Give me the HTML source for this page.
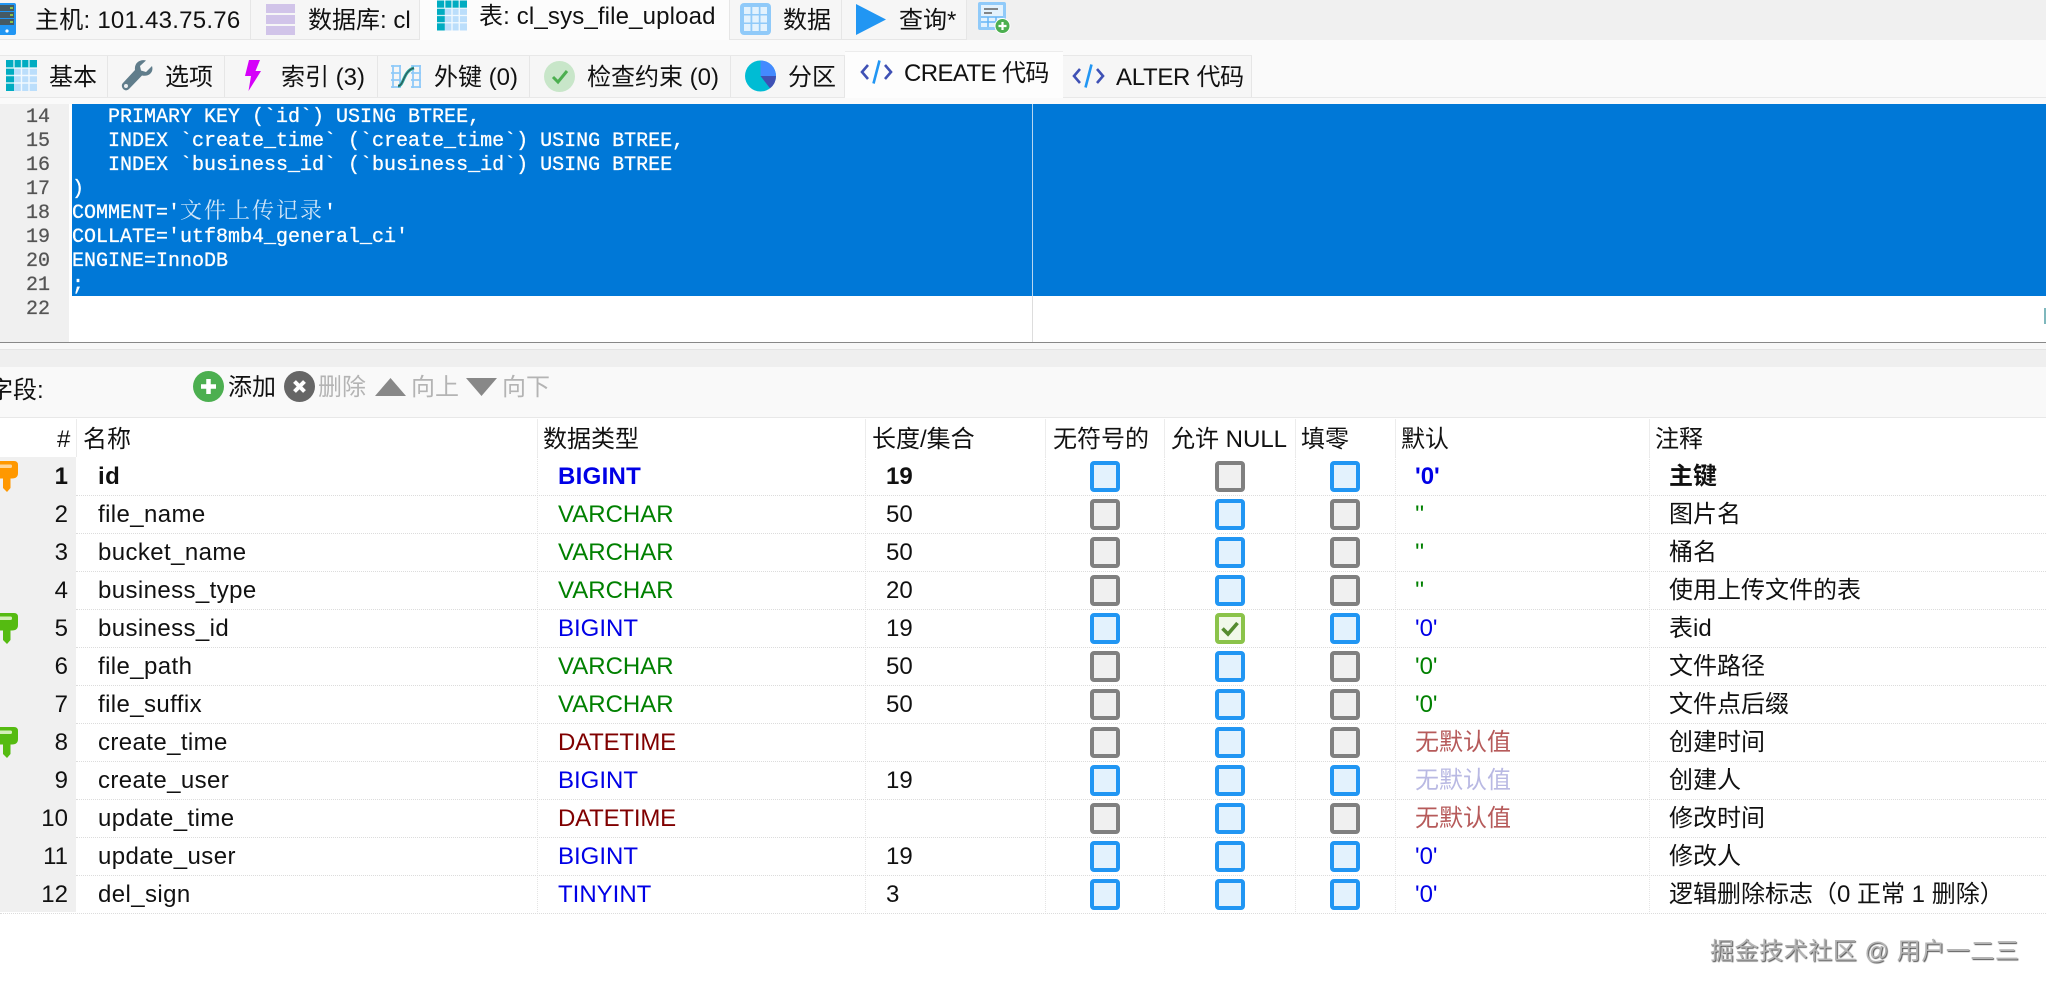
<!DOCTYPE html>
<html><head><meta charset="utf-8"><style>
html,body{margin:0;padding:0;background:#fff}
#p{position:relative;width:2046px;height:993px;overflow:hidden;background:#fff;font-family:"Liberation Sans","Noto Sans CJK SC",sans-serif;font-size:24px;color:#111}
#p div,#p svg{position:absolute}
.t{position:absolute;white-space:nowrap;line-height:1;transform:translateY(calc(-50% + 1px))}
span[style*="left:98px"]{letter-spacing:.4px}
.m{position:absolute;white-space:pre;line-height:24px;height:24px;margin-top:1px;font-family:"Liberation Mono","Noto Sans CJK SC",monospace;font-size:20px;color:#fff;left:72px;-webkit-text-stroke:.3px #fff}
.m b{font-weight:normal;font-size:22px;letter-spacing:2px;font-family:"Noto Serif CJK SC",serif;-webkit-text-stroke:0;line-height:0;color:#cfe5f8}
.n{position:absolute;right:1996px;line-height:1;transform:translateY(calc(-50% + 1px));font-family:"Liberation Mono",monospace;font-size:20px;color:#555;-webkit-text-stroke:.25px #555}
.r{position:absolute;left:0;width:68px;text-align:right;line-height:1;transform:translateY(calc(-50% + 1px));color:#111}
.b{position:absolute;width:22px;height:23px;border:4px solid #2196f3;border-radius:4px;background:#e3f2fd}
.g{border-color:#808080;background:#f0f0f0}
.d{position:absolute;left:76px;right:0;height:0;border-top:1px dotted #dcdcdc}
.v{position:absolute;top:457px;height:455px;width:0;border-left:1px dotted #e4e4e4}
.h{position:absolute;top:419px;height:38px;width:0;border-left:1px solid #ececec}
.o{color:#008000}.u{color:#0000e6}.w{color:#800000}.e{color:#b65a5a}
.k{font-weight:bold}
.tab{position:absolute;background:#f6f6f6;border-right:1px solid #e6e6e6;box-sizing:border-box}
</style></head><body><div id="p">

<div style="left:0;top:0;width:2046px;height:40px;background:#f0f0f0"></div>
<div style="left:0;top:40px;width:2046px;height:64px;background:#fafafa"></div>
<div class="tab" style="left:0;top:0;width:251px;height:40px;border-bottom:1px solid #e6e6e6"></div>
<div class="tab" style="left:251px;top:0;width:169px;height:40px;border-bottom:1px solid #e6e6e6"></div>
<div class="tab" style="left:420px;top:0;width:310px;height:40px;background:#fcfcfc"></div>
<div class="tab" style="left:730px;top:0;width:112px;height:40px;border-bottom:1px solid #e6e6e6"></div>
<div class="tab" style="left:842px;top:0;width:125px;height:40px;border-bottom:1px solid #e6e6e6"></div>

<svg style="left:0;top:3px" width="17" height="32" viewBox="0 0 17 32"><rect x="-4" y="0" width="20" height="32" rx="2" fill="#2196f3"/><rect x="-4" y="2" width="18" height="6" fill="#455a64"/><rect x="-4" y="9" width="18" height="6" fill="#455a64"/><rect x="-4" y="16" width="18" height="6" fill="#455a64"/><rect x="10" y="4" width="3" height="2" fill="#8bc34a"/><rect x="10" y="11" width="3" height="2" fill="#8bc34a"/><rect x="10" y="18" width="3" height="2" fill="#8bc34a"/><circle cx="7" cy="28" r="1.6" fill="#fff"/></svg>
<span class="t" style="left:35px;top:20px;letter-spacing:.25px">主机: 101.43.75.76</span>
<svg style="left:266px;top:4px" width="29" height="31" viewBox="0 0 29 31"><rect width="29" height="9" fill="#d1c4e9"/><rect y="11" width="29" height="9" fill="#d1c4e9"/><rect y="22" width="29" height="9" fill="#d1c4e9"/></svg>
<span class="t" style="left:308px;top:20px">数据库: cl</span>
<svg style="left:437px;top:0" width="30" height="31" viewBox="0 0 31 31"><rect width="31" height="31" fill="#bbdefb"/><rect width="31" height="8" fill="#00acc1"/><rect width="8" height="31" fill="#00acc1"/><path d="M8 15.5H31M8 23H31M15.5 8V31M23 8V31M0 8H31M0 15.5H8M0 23H8M8 0V8M15.5 0V8M23 0V8" stroke="#fff" stroke-width="1.4" fill="none" opacity=".8"/></svg>
<span class="t" style="left:479px;top:16px;letter-spacing:.15px">表: cl_sys_file_upload</span>
<svg style="left:740px;top:3px" width="31" height="32" viewBox="0 0 31 32"><rect width="31" height="32" rx="4" fill="#90caf9"/><rect x="4" y="4" width="6.5" height="7" fill="#e3f2fd"/><rect x="12.3" y="4" width="6.5" height="7" fill="#e3f2fd"/><rect x="20.5" y="4" width="6.5" height="7" fill="#e3f2fd"/><rect x="4" y="12.5" width="6.5" height="7" fill="#e3f2fd"/><rect x="12.3" y="12.5" width="6.5" height="7" fill="#e3f2fd"/><rect x="20.5" y="12.5" width="6.5" height="7" fill="#e3f2fd"/><rect x="4" y="21" width="6.5" height="7" fill="#e3f2fd"/><rect x="12.3" y="21" width="6.5" height="7" fill="#e3f2fd"/><rect x="20.5" y="21" width="6.5" height="7" fill="#e3f2fd"/></svg>
<span class="t" style="left:783px;top:20px">数据</span>
<svg style="left:855px;top:4px" width="32" height="31" viewBox="0 0 32 31"><path d="M1 0L31 15.5L1 31Z" fill="#2196f3"/></svg>
<span class="t" style="left:899px;top:20px">查询*</span>
<svg style="left:978px;top:2px" width="33" height="32" viewBox="0 0 33 32"><rect width="28" height="28" rx="2" fill="#90caf9"/><rect x="3" y="3" width="22" height="22" fill="#e3f2fd"/><path d="M6 7H20M6 11H14" stroke="#616161" stroke-width="1.6"/><path d="M3 15H25M3 20H25M10 15V25M18 15V25" stroke="#64b5f6" stroke-width="1.5"/><circle cx="24.5" cy="24" r="7.5" fill="#4caf50" stroke="#fff" stroke-width="1"/><path d="M24.5 20V28M20.5 24H28.5" stroke="#fff" stroke-width="2.2"/></svg>

<div class="tab" style="left:0;top:55px;width:108px;height:42px;background:#f6f6f6"></div>
<div class="tab" style="left:108px;top:55px;width:117px;height:42px"></div>
<div class="tab" style="left:225px;top:55px;width:153px;height:42px"></div>
<div class="tab" style="left:378px;top:55px;width:152px;height:42px"></div>
<div class="tab" style="left:530px;top:55px;width:201px;height:42px"></div>
<div class="tab" style="left:731px;top:55px;width:114px;height:42px"></div>
<div class="tab" style="left:1063px;top:55px;width:189px;height:42px"></div>
<div style="left:0;top:55px;width:1252px;height:0;border-top:1px solid #e8e8e8"></div>
<div style="left:0;top:97px;width:2046px;height:0;border-top:1px solid #e8e8e8"></div>
<div style="left:845px;top:51px;width:218px;height:47px;background:#fdfdfd;border-top:1px solid #ececec;box-sizing:border-box"></div>

<svg style="left:6px;top:60px" width="31" height="31" viewBox="0 0 31 31"><rect width="31" height="31" fill="#bbdefb"/><rect width="31" height="8" fill="#00acc1"/><rect width="8" height="31" fill="#00acc1"/><path d="M8 15.5H31M8 23H31M15.5 8V31M23 8V31M0 8H31M0 15.5H8M0 23H8M8 0V8M15.5 0V8M23 0V8" stroke="#fff" stroke-width="1.4" fill="none" opacity=".8"/></svg>
<span class="t" style="left:49px;top:77px">基本</span>
<svg style="left:121px;top:60px" width="32" height="31" viewBox="0 0 32 31"><path d="M31 6L25 12L20 10.5L19 6L25 0.5C19 -1 13 3 14 10L1.5 23.5C-1 27 4 33 8 29L21 15.5C28 17 33 12 31 6Z" fill="#607d8b"/><circle cx="5" cy="26" r="2" fill="#eceff1"/></svg>
<span class="t" style="left:165px;top:77px">选项</span>
<svg style="left:245px;top:60px" width="16" height="31" viewBox="0 0 16 31"><path d="M4 0H15L10.5 11H16L3.5 31L6 16H0Z" fill="#d500f9"/></svg>
<span class="t" style="left:281px;top:77px">索引 (3)</span>
<svg style="left:390px;top:64px" width="32" height="25" viewBox="0 0 32 25"><path d="M1 2H11M1 9H11M1 16H11M1 23H11M21 2H31M21 9H31M21 16H31M21 23H31M3 1V24M10 1V24M23 1V24M30 1V24" stroke="#90caf9" stroke-width="1.8" fill="none"/><path d="M8 22C14 22 13 7 24 4" stroke="#26a69a" stroke-width="3" fill="none"/><path d="M8 22C14 22 13 7 24 4" stroke="#37474f" stroke-width="1" fill="none"/></svg>
<span class="t" style="left:434px;top:77px">外键 (0)</span>
<svg style="left:544px;top:61px" width="31" height="31" viewBox="0 0 31 31"><circle cx="15.5" cy="15.5" r="15.5" fill="#c8e6c9"/><path d="M9 16L14 21L23 10" stroke="#4caf50" stroke-width="3" fill="none"/></svg>
<span class="t" style="left:587px;top:77px">检查约束 (0)</span>
<svg style="left:745px;top:60px" width="31" height="32" viewBox="0 0 31 32"><circle cx="15.5" cy="16" r="15.5" fill="#00bcd4"/><path d="M15.5 16V0.5A15.5 15.5 0 0 1 31 16Z" fill="#448aff"/><path d="M15.5 16H31A15.5 15.5 0 0 1 25 28.3Z" fill="#3f51b5"/></svg>
<span class="t" style="left:788px;top:77px">分区</span>
<svg style="left:860px;top:60px" width="33" height="24" viewBox="0 0 33 24"><path d="M8 5L2 12L8 19" stroke="#3f51b5" stroke-width="2.6" fill="none"/><path d="M25 5L31 12L25 19" stroke="#3f51b5" stroke-width="2.6" fill="none"/><path d="M19.5 0.5L13.5 23.5" stroke="#2196f3" stroke-width="2.6"/></svg>
<span class="t" style="left:904px;top:73px;letter-spacing:-.6px">CREATE 代码</span>
<svg style="left:1072px;top:64px" width="33" height="24" viewBox="0 0 33 24"><path d="M8 5L2 12L8 19" stroke="#3f51b5" stroke-width="2.6" fill="none"/><path d="M25 5L31 12L25 19" stroke="#3f51b5" stroke-width="2.6" fill="none"/><path d="M19.5 0.5L13.5 23.5" stroke="#2196f3" stroke-width="2.6"/></svg>
<span class="t" style="left:1116px;top:77px;letter-spacing:-.3px">ALTER 代码</span>

<div style="left:0;top:104px;width:69px;height:238px;background:#f0f0f0"></div>
<div style="left:72px;top:104px;width:1974px;height:192px;background:#0078d7"></div>
<div style="left:1032px;top:104px;width:1px;height:192px;background:#b8d6f0"></div>
<div style="left:1032px;top:296px;width:1px;height:46px;background:#ddd"></div>
<div style="left:2044px;top:308px;width:2px;height:16px;background:#7fb8bd"></div>
<div style="left:0;top:342px;width:2046px;height:1px;background:#888"></div>
<div style="left:0;top:343px;width:2046px;height:6px;background:#f8f8f8"></div>
<div style="left:0;top:349px;width:2046px;height:18px;background:#efefef;border-top:1px solid #e4e4e4;box-sizing:border-box"></div>
<div style="left:0;top:367px;width:2046px;height:51px;background:#f9f9f9;border-bottom:1px solid #e8e8e8;box-sizing:border-box"></div>

<span class="n" style="top:117px">14</span><span class="n" style="top:141px">15</span><span class="n" style="top:165px">16</span><span class="n" style="top:189px">17</span><span class="n" style="top:213px">18</span><span class="n" style="top:237px">19</span><span class="n" style="top:261px">20</span><span class="n" style="top:285px">21</span><span class="n" style="top:309px">22</span>
<span class="m" style="top:105px">   PRIMARY KEY (`id`) USING BTREE,</span>
<span class="m" style="top:129px">   INDEX `create_time` (`create_time`) USING BTREE,</span>
<span class="m" style="top:153px">   INDEX `business_id` (`business_id`) USING BTREE</span>
<span class="m" style="top:177px">)</span>
<span class="m" style="top:201px">COMMENT='<b>文件上传记录</b>'</span>
<span class="m" style="top:225px">COLLATE='utf8mb4_general_ci'</span>
<span class="m" style="top:249px">ENGINE=InnoDB</span>
<span class="m" style="top:273px">;</span>

<span class="t" style="left:-11px;top:390px">字段:</span>
<svg style="left:193px;top:371px" width="31" height="31" viewBox="0 0 31 31"><circle cx="15.5" cy="15.5" r="15.5" fill="#4caf50"/><path d="M15.5 8V23M8 15.5H23" stroke="#fff" stroke-width="4.5"/></svg>
<span class="t" style="left:228px;top:387px">添加</span>
<svg style="left:284px;top:371px" width="31" height="31" viewBox="0 0 31 31"><circle cx="15.5" cy="15.5" r="15.5" fill="#666"/><path d="M10.5 10.5L20.5 20.5M20.5 10.5L10.5 20.5" stroke="#fff" stroke-width="4"/></svg>
<span class="t" style="left:318px;top:387px;color:#b4b4b4">删除</span>
<svg style="left:375px;top:378px" width="31" height="18" viewBox="0 0 31 18"><path d="M15.5 0L31 18H0Z" fill="#888"/></svg>
<span class="t" style="left:411px;top:387px;color:#b4b4b4">向上</span>
<svg style="left:466px;top:378px" width="31" height="18" viewBox="0 0 31 18"><path d="M0 0H31L15.5 18Z" fill="#888"/></svg>
<span class="t" style="left:502px;top:387px;color:#b4b4b4">向下</span>

<div style="left:0;top:457px;width:76px;height:455px;background:#f0f0f0"></div>
<i class="h" style="left:76px"></i><i class="h" style="left:537px"></i><i class="h" style="left:865px"></i><i class="h" style="left:1045px"></i><i class="h" style="left:1164px"></i><i class="h" style="left:1295px"></i><i class="h" style="left:1395px"></i><i class="h" style="left:1649px"></i>
<i class="v" style="left:537px"></i><i class="v" style="left:865px"></i><i class="v" style="left:1045px"></i><i class="v" style="left:1164px"></i><i class="v" style="left:1295px"></i><i class="v" style="left:1395px"></i><i class="v" style="left:1649px"></i>
<i class="d" style="top:495px"></i><i class="d" style="top:533px"></i><i class="d" style="top:571px"></i><i class="d" style="top:609px"></i><i class="d" style="top:647px"></i><i class="d" style="top:685px"></i><i class="d" style="top:723px"></i><i class="d" style="top:761px"></i><i class="d" style="top:799px"></i><i class="d" style="top:837px"></i><i class="d" style="top:875px"></i><i class="d" style="top:913px;left:0"></i>

<span class="t" style="left:57px;top:439px">#</span>
<span class="t" style="left:83px;top:439px">名称</span>
<span class="t" style="left:543px;top:439px">数据类型</span>
<span class="t" style="left:872px;top:439px">长度/集合</span>
<span class="t" style="left:1053px;top:439px">无符号的</span>
<span class="t" style="left:1171px;top:439px">允许 NULL</span>
<span class="t" style="left:1301px;top:439px">填零</span>
<span class="t" style="left:1401px;top:439px">默认</span>
<span class="t" style="left:1655px;top:439px">注释</span>

<svg style="left:0;top:461px" width="19" height="31" viewBox="0 0 19 31"><path d="M-3 0H14Q18 0 18 4V12Q18 17.5 12 17.5H10.5V27L7 31L3 27V17.5H0Q-3 17.5 -3 12Z" fill="#ff9800"/><rect x="-1" y="3.5" width="13" height="3.5" rx="1.5" fill="#ffd699"/></svg>
<svg style="left:0;top:613px" width="19" height="31" viewBox="0 0 19 31"><path d="M-3 0H14Q18 0 18 4V12Q18 17.5 12 17.5H10.5V27L7 31L3 27V17.5H0Q-3 17.5 -3 12Z" fill="#55bb11"/><rect x="-1" y="3.5" width="13" height="3.5" rx="1.5" fill="#d3efb8"/></svg>
<svg style="left:0;top:727px" width="19" height="31" viewBox="0 0 19 31"><path d="M-3 0H14Q18 0 18 4V12Q18 17.5 12 17.5H10.5V27L7 31L3 27V17.5H0Q-3 17.5 -3 12Z" fill="#55bb11"/><rect x="-1" y="3.5" width="13" height="3.5" rx="1.5" fill="#d3efb8"/></svg>

<span class="r k" style="top:476px">1</span><span class="t k" style="left:98px;top:476px">id</span><span class="t k u" style="left:558px;top:476px;letter-spacing:.3px">BIGINT</span><span class="t k" style="left:886px;top:476px">19</span><span class="t k u" style="left:1415px;top:476px">'0'</span><span class="t k" style="left:1669px;top:476px">主键</span>
<span class="r" style="top:514px">2</span><span class="t" style="left:98px;top:514px">file_name</span><span class="t o" style="left:558px;top:514px">VARCHAR</span><span class="t" style="left:886px;top:514px">50</span><span class="t o" style="left:1415px;top:514px">''</span><span class="t" style="left:1669px;top:514px">图片名</span>
<span class="r" style="top:552px">3</span><span class="t" style="left:98px;top:552px">bucket_name</span><span class="t o" style="left:558px;top:552px">VARCHAR</span><span class="t" style="left:886px;top:552px">50</span><span class="t o" style="left:1415px;top:552px">''</span><span class="t" style="left:1669px;top:552px">桶名</span>
<span class="r" style="top:590px">4</span><span class="t" style="left:98px;top:590px">business_type</span><span class="t o" style="left:558px;top:590px">VARCHAR</span><span class="t" style="left:886px;top:590px">20</span><span class="t o" style="left:1415px;top:590px">''</span><span class="t" style="left:1669px;top:590px">使用上传文件的表</span>
<span class="r" style="top:628px">5</span><span class="t" style="left:98px;top:628px">business_id</span><span class="t u" style="left:558px;top:628px">BIGINT</span><span class="t" style="left:886px;top:628px">19</span><span class="t u" style="left:1415px;top:628px">'0'</span><span class="t" style="left:1669px;top:628px">表id</span>
<span class="r" style="top:666px">6</span><span class="t" style="left:98px;top:666px">file_path</span><span class="t o" style="left:558px;top:666px">VARCHAR</span><span class="t" style="left:886px;top:666px">50</span><span class="t o" style="left:1415px;top:666px">'0'</span><span class="t" style="left:1669px;top:666px">文件路径</span>
<span class="r" style="top:704px">7</span><span class="t" style="left:98px;top:704px">file_suffix</span><span class="t o" style="left:558px;top:704px">VARCHAR</span><span class="t" style="left:886px;top:704px">50</span><span class="t o" style="left:1415px;top:704px">'0'</span><span class="t" style="left:1669px;top:704px">文件点后缀</span>
<span class="r" style="top:742px">8</span><span class="t" style="left:98px;top:742px">create_time</span><span class="t w" style="left:558px;top:742px;letter-spacing:-.2px">DATETIME</span><span class="t e" style="left:1415px;top:742px">无默认值</span><span class="t" style="left:1669px;top:742px">创建时间</span>
<span class="r" style="top:780px">9</span><span class="t" style="left:98px;top:780px">create_user</span><span class="t u" style="left:558px;top:780px">BIGINT</span><span class="t" style="left:886px;top:780px">19</span><span class="t" style="left:1415px;top:780px;color:#b9b9e3">无默认值</span><span class="t" style="left:1669px;top:780px">创建人</span>
<span class="r" style="top:818px">10</span><span class="t" style="left:98px;top:818px">update_time</span><span class="t w" style="left:558px;top:818px;letter-spacing:-.2px">DATETIME</span><span class="t e" style="left:1415px;top:818px">无默认值</span><span class="t" style="left:1669px;top:818px">修改时间</span>
<span class="r" style="top:856px">11</span><span class="t" style="left:98px;top:856px">update_user</span><span class="t u" style="left:558px;top:856px">BIGINT</span><span class="t" style="left:886px;top:856px">19</span><span class="t u" style="left:1415px;top:856px">'0'</span><span class="t" style="left:1669px;top:856px">修改人</span>
<span class="r" style="top:894px">12</span><span class="t" style="left:98px;top:894px">del_sign</span><span class="t u" style="left:558px;top:894px">TINYINT</span><span class="t" style="left:886px;top:894px">3</span><span class="t u" style="left:1415px;top:894px">'0'</span><span class="t" style="left:1669px;top:894px">逻辑删除标志（0 正常 1 删除）</span>

<i class="b" style="left:1090px;top:461px"></i><i class="b g" style="left:1215px;top:461px"></i><i class="b" style="left:1330px;top:461px"></i>
<i class="b g" style="left:1090px;top:499px"></i><i class="b" style="left:1215px;top:499px"></i><i class="b g" style="left:1330px;top:499px"></i>
<i class="b g" style="left:1090px;top:537px"></i><i class="b" style="left:1215px;top:537px"></i><i class="b g" style="left:1330px;top:537px"></i>
<i class="b g" style="left:1090px;top:575px"></i><i class="b" style="left:1215px;top:575px"></i><i class="b g" style="left:1330px;top:575px"></i>
<i class="b" style="left:1090px;top:613px"></i><i class="b" style="left:1215px;top:613px;border-color:#8bc34a;background:#f1f8e9"></i><i class="b" style="left:1330px;top:613px"></i>
<i class="b g" style="left:1090px;top:651px"></i><i class="b" style="left:1215px;top:651px"></i><i class="b g" style="left:1330px;top:651px"></i>
<i class="b g" style="left:1090px;top:689px"></i><i class="b" style="left:1215px;top:689px"></i><i class="b g" style="left:1330px;top:689px"></i>
<i class="b g" style="left:1090px;top:727px"></i><i class="b" style="left:1215px;top:727px"></i><i class="b g" style="left:1330px;top:727px"></i>
<i class="b" style="left:1090px;top:765px"></i><i class="b" style="left:1215px;top:765px"></i><i class="b" style="left:1330px;top:765px"></i>
<i class="b g" style="left:1090px;top:803px"></i><i class="b" style="left:1215px;top:803px"></i><i class="b g" style="left:1330px;top:803px"></i>
<i class="b" style="left:1090px;top:841px"></i><i class="b" style="left:1215px;top:841px"></i><i class="b" style="left:1330px;top:841px"></i>
<i class="b" style="left:1090px;top:879px"></i><i class="b" style="left:1215px;top:879px"></i><i class="b" style="left:1330px;top:879px"></i>
<svg style="left:1221px;top:620px" width="18" height="17" viewBox="0 0 18 17"><path d="M1.5 8.5L7 14L16.5 3" stroke="#558b2f" stroke-width="3.6" fill="none"/></svg>

<span class="t" style="left:1710px;top:951px;color:#b4b4b4;letter-spacing:.55px;text-shadow:1px 1px 1px #555">掘金技术社区 @ 用户一二三</span>
</div></body></html>
